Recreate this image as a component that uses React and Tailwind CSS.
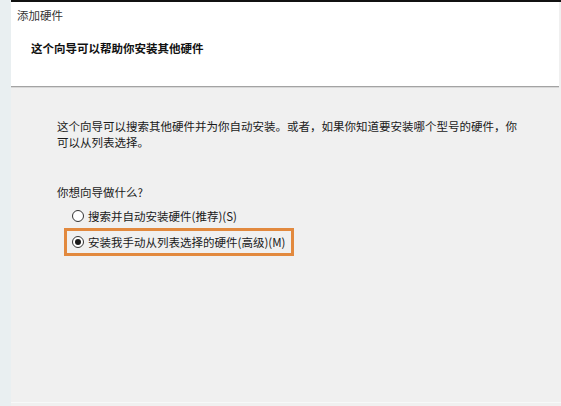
function Radio({ checked }) {
    return (
        <span className="flex items-center justify-center w-[12px] h-[12px] rounded-full border border-[#333333] bg-white shrink-0">
            {checked && <span className="w-[6px] h-[6px] rounded-full bg-[#1a1a1a]" />}
        </span>
    );
}

export default function App() {
    const font = { fontFamily: '"Microsoft YaHei", "Noto Sans CJK SC", "Liberation Sans", sans-serif' };
    return (
        <div className="flex w-[561px] h-[406px] bg-[#f0f0f0] text-[#1a1a1a] overflow-hidden" style={font}>
            <div className="w-[11px] bg-[#e9eff1] shrink-0" />
            <div className="flex-1 flex flex-col">
                <div className="h-[2px] bg-[#111111]" />
                <div className="h-[85px] bg-white border-b border-[#a3a3a3] shadow-[0_1px_0_#d8d8d8] mr-[2px]">
                    <div className="pl-[6px] pt-[5px] text-[11.5px] leading-[16px] text-[#333333]">添加硬件</div>
                    <div className="pl-[20px] mt-[17px] text-[11.5px] leading-[16px] font-bold text-[#111111]">
                        这个向导可以帮助你安装其他硬件
                    </div>
                </div>
                <div className="flex-1 pl-[46px] pt-[31px] text-[11.5px] leading-[16px] border-b border-[#f7f9f9] mb-[3px]">
                    <p className="w-[470px]">
                        这个向导可以搜索其他硬件并为你自动安装。或者，如果你知道要安装哪个型号的硬件，你可以从列表选择。
                    </p>
                    <p className="mt-[34px]">你想向导做什么?</p>
                    <div className="ml-[7px] mt-[6px] flex flex-col items-start">
                        <label className="flex items-center gap-[4px] h-[20px] pl-[8px]">
                            <Radio />
                            <span>搜索并自动安装硬件(推荐)(S)</span>
                        </label>
                        <label className="flex items-center gap-[4px] h-[28px] w-[230px] mt-[2px] pl-[5px] border-[3px] border-[#e2893e]">
                            <Radio checked />
                            <span>安装我手动从列表选择的硬件(高级)(M)</span>
                        </label>
                    </div>
                </div>
            </div>
        </div>
    );
}
